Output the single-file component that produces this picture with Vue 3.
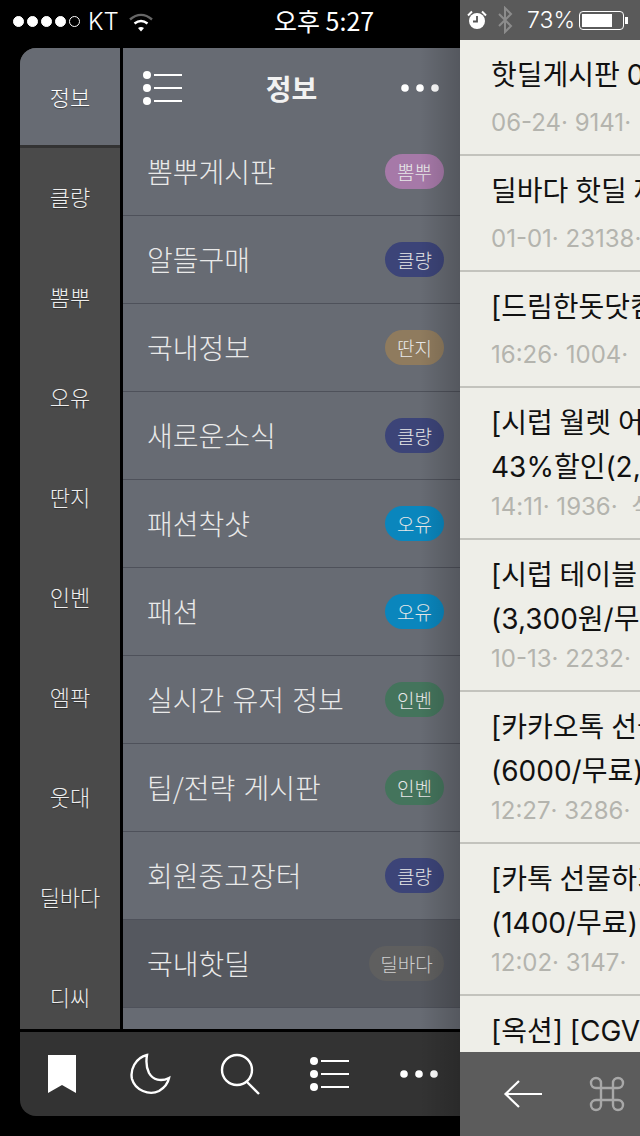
<script setup>
const rail = ['클량', '뽐뿌', '오유', '딴지', '인벤', '엠팍', '웃대', '딜바다', '디씨']
const boards = [
  { name: '뽐뿌게시판', tag: '뽐뿌', color: '#a679a8' },
  { name: '알뜰구매', tag: '클량', color: '#3c4478' },
  { name: '국내정보', tag: '딴지', color: '#8f7b5e' },
  { name: '새로운소식', tag: '클량', color: '#3c4478' },
  { name: '패션착샷', tag: '오유', color: '#0a86bd' },
  { name: '패션', tag: '오유', color: '#0a86bd' },
  { name: '실시간 유저 정보', tag: '인벤', color: '#44745c' },
  { name: '팁/전략 게시판', tag: '인벤', color: '#44745c' },
  { name: '회원중고장터', tag: '클량', color: '#3c4478' },
  { name: '국내핫딜', tag: '딜바다', color: '#5f5f5f', wide: true, dim: true }
]
const posts = [
  { lines: ['핫딜게시판 0'], meta: '06-24· 9141·   0' },
  { lines: ['딜바다 핫딜 제'], meta: '01-01· 23138· 0' },
  { lines: ['[드림한돗닷컴'], meta: '16:26· 1004·  0' },
  { lines: ['[시럽 월렛 어', '43%할인(2,9'], meta: '14:11· 1936·  식' },
  { lines: ['[시럽 테이블', '(3,300원/무'], meta: '10-13· 2232·   0' },
  { lines: ['[카카오톡 선물', '(6000/무료)'], meta: '12:27· 3286·   0' },
  { lines: ['[카톡 선물하기', '(1400/무료)'], meta: '12:02· 3147·  4' },
  { lines: ['[옥션] [CGV'], meta: '' }
]
</script>

<template>
  <div class="screen">
    <div class="left">
      <div class="status">
        <div class="signal">
          <i class="dot"></i><i class="dot"></i><i class="dot"></i><i class="dot"></i><i class="dot empty"></i>
        </div>
        <span class="carrier">KT</span>
        <svg class="wifi" width="26" height="20" viewBox="0 0 26 20" fill="none" stroke-width="2.4">
          <path d="M2 7.500C9 1.500 17 1.500 24 7.500" stroke="#666" />
          <path d="M6.500 11.500C11 8 15 8 19.500 11.500" stroke="#fff" />
          <path d="M10 16l3 3.500 3-3.500c-2-1.400-4-1.400-6 0z" fill="#fff" />
        </svg>
        <span class="clock">오후 5:27</span>
      </div>
      <div class="panel">
        <div class="columns">
          <nav class="rail">
            <div class="rail-item active">정보</div>
            <div v-for="r in rail" :key="r" class="rail-item">{{ r }}</div>
          </nav>
          <section class="list">
            <header class="list-head">
              <svg width="42" height="36" viewBox="0 0 42 36" fill="none" stroke="#fff" stroke-width="2">
                <circle cx="6" cy="5" r="4" fill="#fff" stroke="none" />
                <circle cx="6" cy="18" r="4" fill="#fff" stroke="none" />
                <circle cx="6" cy="31" r="4" fill="#fff" stroke="none" />
                <path d="M13 5h28M13 18h28M13 31h28" />
              </svg>
              <h1>정보</h1>
              <svg width="40" height="10" viewBox="0 0 40 10" fill="#fff">
                <circle cx="5" cy="5" r="3.8" /><circle cx="20" cy="5" r="3.8" /><circle cx="35" cy="5" r="3.8" />
              </svg>
            </header>
            <div v-for="b in boards" :key="b.name" class="board" :class="{ pressed: b.dim }">
              <span class="board-name">{{ b.name }}</span>
              <span class="tag" :class="{ wide: b.wide }" :style="{ background: b.color }">{{ b.tag }}</span>
            </div>
          </section>
        </div>
        <footer class="tools">
          <svg width="30" height="38" viewBox="0 0 30 38" fill="#fff"><path d="M1 0h28v38L15 30 1 38z" /></svg>
          <svg class="moon" width="42" height="42" viewBox="0 0 42 42" fill="none" stroke="#fff" stroke-width="2.4">
            <path d="M18 2C6 5 1 17 3 26c3 11 17 17 27 12 5-3 9-8 10-13-8 4-16 2-20-5-3-6-3-12-2-18z" />
          </svg>
          <svg width="42" height="42" viewBox="0 0 42 42" fill="none" stroke="#fff" stroke-width="2.4">
            <circle cx="17" cy="17" r="15" /><path d="M27 29l12 12" />
          </svg>
          <svg class="menu" width="42" height="36" viewBox="0 0 42 36" fill="none" stroke="#fff" stroke-width="2">
            <circle cx="6" cy="5" r="4" fill="#fff" stroke="none" />
            <circle cx="6" cy="18" r="4" fill="#fff" stroke="none" />
            <circle cx="6" cy="31" r="4" fill="#fff" stroke="none" />
            <path d="M13 5h28M13 18h28M13 31h28" />
          </svg>
          <svg width="40" height="10" viewBox="0 0 40 10" fill="#fff">
            <circle cx="5" cy="5" r="3.800" /><circle cx="20" cy="5" r="3.800" /><circle cx="35" cy="5" r="3.800" />
          </svg>
        </footer>
      </div>
    </div>
    <div class="right">
      <div class="status-r">
        <svg class="alarm" width="20" height="20" viewBox="0 0 20 20">
          <circle cx="10" cy="11" r="8" fill="#fff" />
          <path d="M10 6v5.500H6" fill="none" stroke="#555" stroke-width="1.8" />
          <path d="M1 5.500L5 1.500M19 5.500L15 1.500" stroke="#fff" stroke-width="2" />
        </svg>
        <svg class="bt" width="16" height="28" viewBox="0 0 16 28" fill="none" stroke="#8c8c8c" stroke-width="2">
          <path d="M2 8l12 12-6 6V2l6 6L2 20" />
        </svg>
        <span class="pct">73%</span>
        <div class="battery"><div class="charge"></div></div>
        <i class="nub"></i>
      </div>
      <div class="posts">
        <article v-for="(p, i) in posts" :key="i" class="post" :class="{ two: p.lines.length > 1 }">
          <div v-for="l in p.lines" :key="l" class="post-title">{{ l }}</div>
          <div v-if="p.meta" class="post-meta">{{ p.meta }}</div>
        </article>
      </div>
      <footer class="tools-r">
        <svg width="40" height="30" viewBox="0 0 40 30" fill="none" stroke="#fff" stroke-width="2.2">
          <path d="M39 15H3M16 2L2.500 15 16 28" />
        </svg>
        <svg width="36" height="36" viewBox="0 0 36 36" fill="none" stroke="#a8a8a8" stroke-width="2.4">
          <path d="M12 12h12v12H12zM12 12H7a5 5 0 1 1 5-5zM24 12V7a5 5 0 1 1 5 5zM24 24h5a5 5 0 1 1-5 5zM12 24v5a5 5 0 1 1-5-5z" />
        </svg>
      </footer>
    </div>
  </div>
</template>

<style>
html, body { margin: 0; background: #000; }
</style>

<style scoped>
* { box-sizing: border-box; }
.screen {
  width: 640px;
  height: 1136px;
  display: flex;
  overflow: hidden;
  background: #000;
  font-family: "Noto Sans CJK KR", "Noto Sans", sans-serif;
  font-weight: 400;
}
.left { width: 460px; flex: none; display: flex; flex-direction: column; }
.status {
  height: 48px;
  display: flex;
  align-items: center;
  padding: 0 0 5px 13px;
  color: #fff;
  position: relative;
}
.signal { display: flex; gap: 3px; }
.dot { width: 11px; height: 11px; border-radius: 50%; background: #fff; border: 1px solid #fff; }
.dot.empty { background: transparent; }
.carrier { font-family: "Inter", "Roboto", sans-serif; font-size: 24px; margin-left: 8px; font-weight: 300; }
.wifi { margin-left: 9px; }
.clock {
  position: absolute;
  left: 274px;
  top: 2px;
  font-size: 25px;
  line-height: 36px;
  white-space: nowrap;
}
.panel {
  margin-left: 20px;
  height: 1068px;
  border-radius: 16px 0 0 16px;
  overflow: hidden;
  display: flex;
  flex-direction: column;
  position: relative;
}
.panel::after {
  content: "";
  position: absolute;
  top: 0;
  right: 0;
  bottom: 0;
  width: 40px;
  background: linear-gradient(to right, rgba(0,0,0,0), rgba(0,0,0,.18));
  pointer-events: none;
}
.columns { height: 981px; display: flex; gap: 3px; }
.rail { width: 100px; flex: none; background: #4a4a4a; overflow: hidden; color: #eee; }
.rail-item {
  height: 100px;
  padding-bottom: 4px;
  display: flex;
  align-items: center;
  justify-content: center;
  font-size: 22px;
  font-weight: 300;
  text-shadow: 0 1px 1px rgba(0,0,0,.35);
}
.rail-item.active {
  height: 100px;
  padding-bottom: 1px;
  background: #676b73;
  border-bottom: 3px solid #333;
  color: #fff;
}
.list { flex: 1; background: #676b73; overflow: hidden; color: #fff; }
.list-head {
  height: 80px;
  padding: 0 20px 0 18px;
  display: flex;
  align-items: center;
  justify-content: space-between;
}
.list-head h1 { margin: 0; font-size: 28px; font-weight: 700; color: #f2f2f2; }
.board {
  height: 88px;
  padding: 0 16px 0 24px;
  border-bottom: 1px solid #4e515a;
  display: flex;
  align-items: center;
  justify-content: space-between;
}
.board.pressed { background: #55585f; border-top: 1px solid #4e515a; margin-top: -1px; height: 89px; }
.board-name {
  font-size: 28px;
  font-weight: 300;
  color: #e9e9e9;
  white-space: nowrap;
  word-spacing: 2px;
  padding-bottom: 2px;
}
.tag {
  width: 59px;
  height: 35px;
  border-radius: 18px;
  display: flex;
  align-items: center;
  justify-content: center;
  font-size: 19px;
  font-weight: 300;
  color: #e8e8e8;
}
.tag.wide { width: 75px; color: #cfcfcf; }
.tools {
  margin-top: 3px;
  height: 84px;
  background: #333;
  display: flex;
  align-items: center;
  justify-content: space-between;
  padding: 0 21px 0 27px;
  flex: none;
}
.moon { margin-left: 3px; }
.menu { margin-left: -2px; }
.right { width: 180px; flex: none; display: flex; flex-direction: column; background: #eeeee8; }
.status-r {
  height: 40px;
  flex: none;
  background: #5a5a5a;
  display: flex;
  align-items: center;
  padding-left: 7px;
  color: #fff;
}
.bt { margin-left: 10px; }
.pct { margin-left: 14px; font-family: "Inter", "Roboto", sans-serif; font-size: 23px; font-weight: 300; }
.battery { width: 45px; height: 19px; margin-left: 4px; border: 1px solid #fff; border-radius: 4px; padding: 2px; }
.charge { width: 78%; height: 100%; background: #fff; }
.nub { width: 3px; height: 7px; margin-left: 1px; background: #fff; }
.posts { flex: 1; overflow: hidden; min-height: 0; }
.post {
  height: 116px;
  padding: 13px 0 0 31px;
  border-bottom: 2px solid #c3c3bd;
  overflow: hidden;
}
.post.two { height: 152px; }
.post-title {
  font-family: "Inter", "Noto Sans CJK KR", sans-serif;
  font-size: 28px;
  line-height: 44px;
  color: #111;
  white-space: nowrap;
  word-spacing: -1px;
}
.post-meta {
  margin-top: 11px;
  font-family: "Inter", "Roboto", "Noto Sans CJK KR", sans-serif;
  font-size: 24px;
  line-height: 30px;
  color: #b4b4ae;
  white-space: pre;
}
.post.two .post-meta { margin-top: 3px; }
.tools-r {
  height: 84px;
  flex: none;
  background: #5c5c5c;
  display: flex;
  align-items: center;
  gap: 46px;
  padding: 0 0 0 43px;
}
</style>
